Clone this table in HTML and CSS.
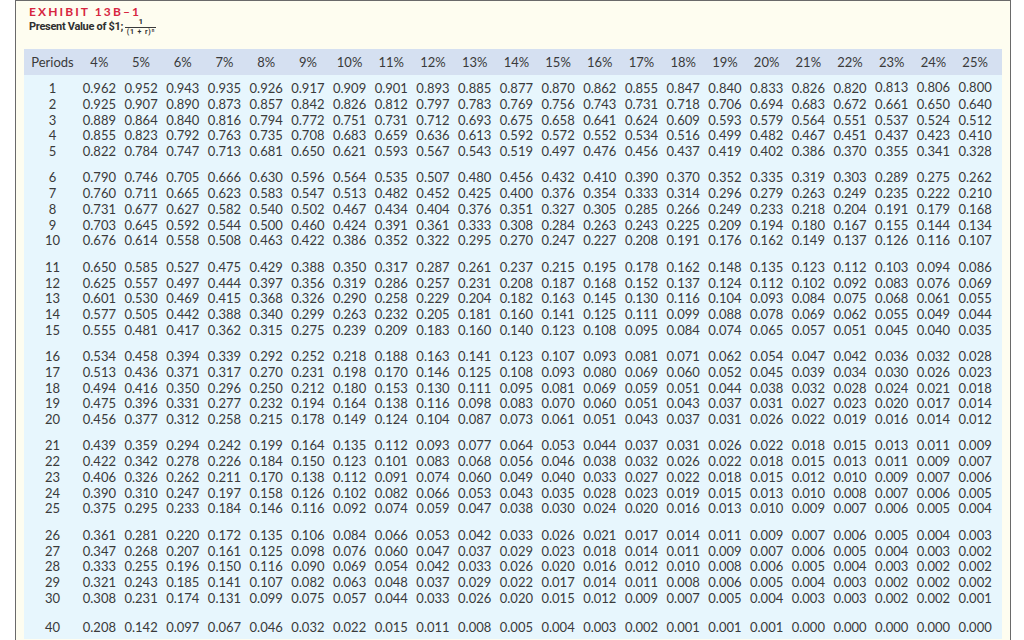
FILE: index.html
```html
<!DOCTYPE html>
<html lang="en">
<head>
<meta charset="utf-8">
<title>Exhibit 13B-1 Present Value of $1</title>
<link rel="stylesheet" href="styles.css">
</head>
<body>
<div class="box">
  <div class="exhibit">EXHIBIT 13B–1</div>
  <div class="pv">
    <span class="pv-text">Present Value of $1;</span>
    <span class="frac"><span class="num">1</span><span class="den">(1 + r)<sup>n</sup></span></span>
  </div>
  <div class="table">
    <div class="head">
      <span class="p">Periods</span><span>4%</span><span>5%</span><span>6%</span><span>7%</span><span>8%</span><span>9%</span><span>10%</span><span>11%</span><span>12%</span><span>13%</span><span>14%</span><span>15%</span><span>16%</span><span>17%</span><span>18%</span><span>19%</span><span>20%</span><span>21%</span><span>22%</span><span>23%</span><span>24%</span><span>25%</span>
    </div>
    <div class="body">
      <div class="group">
        <div class="row"><span class="p">1</span><span>0.962</span><span>0.952</span><span>0.943</span><span>0.935</span><span>0.926</span><span>0.917</span><span>0.909</span><span>0.901</span><span>0.893</span><span>0.885</span><span>0.877</span><span>0.870</span><span>0.862</span><span>0.855</span><span>0.847</span><span>0.840</span><span>0.833</span><span>0.826</span><span>0.820</span><span class="up">0.813</span><span class="up">0.806</span><span class="up">0.800</span></div>
        <div class="row"><span class="p">2</span><span>0.925</span><span>0.907</span><span>0.890</span><span>0.873</span><span>0.857</span><span>0.842</span><span>0.826</span><span>0.812</span><span>0.797</span><span>0.783</span><span>0.769</span><span>0.756</span><span>0.743</span><span>0.731</span><span>0.718</span><span>0.706</span><span>0.694</span><span>0.683</span><span>0.672</span><span>0.661</span><span>0.650</span><span>0.640</span></div>
        <div class="row"><span class="p">3</span><span>0.889</span><span>0.864</span><span>0.840</span><span>0.816</span><span>0.794</span><span>0.772</span><span>0.751</span><span>0.731</span><span>0.712</span><span>0.693</span><span>0.675</span><span>0.658</span><span>0.641</span><span>0.624</span><span>0.609</span><span>0.593</span><span>0.579</span><span>0.564</span><span>0.551</span><span>0.537</span><span>0.524</span><span>0.512</span></div>
        <div class="row"><span class="p">4</span><span>0.855</span><span>0.823</span><span>0.792</span><span>0.763</span><span>0.735</span><span>0.708</span><span>0.683</span><span>0.659</span><span>0.636</span><span>0.613</span><span>0.592</span><span>0.572</span><span>0.552</span><span>0.534</span><span>0.516</span><span>0.499</span><span>0.482</span><span>0.467</span><span>0.451</span><span>0.437</span><span>0.423</span><span>0.410</span></div>
        <div class="row"><span class="p">5</span><span>0.822</span><span>0.784</span><span>0.747</span><span>0.713</span><span>0.681</span><span>0.650</span><span>0.621</span><span>0.593</span><span>0.567</span><span>0.543</span><span>0.519</span><span>0.497</span><span>0.476</span><span>0.456</span><span>0.437</span><span>0.419</span><span>0.402</span><span>0.386</span><span>0.370</span><span>0.355</span><span>0.341</span><span>0.328</span></div>
      </div>
      <div class="group">
        <div class="row"><span class="p">6</span><span>0.790</span><span>0.746</span><span>0.705</span><span>0.666</span><span>0.630</span><span>0.596</span><span>0.564</span><span>0.535</span><span>0.507</span><span>0.480</span><span>0.456</span><span>0.432</span><span>0.410</span><span>0.390</span><span>0.370</span><span>0.352</span><span>0.335</span><span>0.319</span><span>0.303</span><span>0.289</span><span>0.275</span><span>0.262</span></div>
        <div class="row"><span class="p">7</span><span>0.760</span><span>0.711</span><span>0.665</span><span>0.623</span><span>0.583</span><span>0.547</span><span>0.513</span><span>0.482</span><span>0.452</span><span>0.425</span><span>0.400</span><span>0.376</span><span>0.354</span><span>0.333</span><span>0.314</span><span>0.296</span><span>0.279</span><span>0.263</span><span>0.249</span><span>0.235</span><span>0.222</span><span>0.210</span></div>
        <div class="row"><span class="p">8</span><span>0.731</span><span>0.677</span><span>0.627</span><span>0.582</span><span>0.540</span><span>0.502</span><span>0.467</span><span>0.434</span><span>0.404</span><span>0.376</span><span>0.351</span><span>0.327</span><span>0.305</span><span>0.285</span><span>0.266</span><span>0.249</span><span>0.233</span><span>0.218</span><span>0.204</span><span>0.191</span><span>0.179</span><span>0.168</span></div>
        <div class="row"><span class="p">9</span><span>0.703</span><span>0.645</span><span>0.592</span><span>0.544</span><span>0.500</span><span>0.460</span><span>0.424</span><span>0.391</span><span>0.361</span><span>0.333</span><span>0.308</span><span>0.284</span><span>0.263</span><span>0.243</span><span>0.225</span><span>0.209</span><span>0.194</span><span>0.180</span><span>0.167</span><span>0.155</span><span>0.144</span><span>0.134</span></div>
        <div class="row"><span class="p">10</span><span>0.676</span><span>0.614</span><span>0.558</span><span>0.508</span><span>0.463</span><span>0.422</span><span>0.386</span><span>0.352</span><span>0.322</span><span>0.295</span><span>0.270</span><span>0.247</span><span>0.227</span><span>0.208</span><span>0.191</span><span>0.176</span><span>0.162</span><span>0.149</span><span>0.137</span><span>0.126</span><span>0.116</span><span>0.107</span></div>
      </div>
      <div class="group">
        <div class="row"><span class="p">11</span><span>0.650</span><span>0.585</span><span>0.527</span><span>0.475</span><span>0.429</span><span>0.388</span><span>0.350</span><span>0.317</span><span>0.287</span><span>0.261</span><span>0.237</span><span>0.215</span><span>0.195</span><span>0.178</span><span>0.162</span><span>0.148</span><span>0.135</span><span>0.123</span><span>0.112</span><span>0.103</span><span>0.094</span><span>0.086</span></div>
        <div class="row"><span class="p">12</span><span>0.625</span><span>0.557</span><span>0.497</span><span>0.444</span><span>0.397</span><span>0.356</span><span>0.319</span><span>0.286</span><span>0.257</span><span>0.231</span><span>0.208</span><span>0.187</span><span>0.168</span><span>0.152</span><span>0.137</span><span>0.124</span><span>0.112</span><span>0.102</span><span>0.092</span><span>0.083</span><span>0.076</span><span>0.069</span></div>
        <div class="row"><span class="p">13</span><span>0.601</span><span>0.530</span><span>0.469</span><span>0.415</span><span>0.368</span><span>0.326</span><span>0.290</span><span>0.258</span><span>0.229</span><span>0.204</span><span>0.182</span><span>0.163</span><span>0.145</span><span>0.130</span><span>0.116</span><span>0.104</span><span>0.093</span><span>0.084</span><span>0.075</span><span>0.068</span><span>0.061</span><span>0.055</span></div>
        <div class="row"><span class="p">14</span><span>0.577</span><span>0.505</span><span>0.442</span><span>0.388</span><span>0.340</span><span>0.299</span><span>0.263</span><span>0.232</span><span>0.205</span><span>0.181</span><span>0.160</span><span>0.141</span><span>0.125</span><span>0.111</span><span>0.099</span><span>0.088</span><span>0.078</span><span>0.069</span><span>0.062</span><span>0.055</span><span>0.049</span><span>0.044</span></div>
        <div class="row"><span class="p">15</span><span>0.555</span><span>0.481</span><span>0.417</span><span>0.362</span><span>0.315</span><span>0.275</span><span>0.239</span><span>0.209</span><span>0.183</span><span>0.160</span><span>0.140</span><span>0.123</span><span>0.108</span><span>0.095</span><span>0.084</span><span>0.074</span><span>0.065</span><span>0.057</span><span>0.051</span><span>0.045</span><span>0.040</span><span>0.035</span></div>
      </div>
      <div class="group">
        <div class="row"><span class="p">16</span><span>0.534</span><span>0.458</span><span>0.394</span><span>0.339</span><span>0.292</span><span>0.252</span><span>0.218</span><span>0.188</span><span>0.163</span><span>0.141</span><span>0.123</span><span>0.107</span><span>0.093</span><span>0.081</span><span>0.071</span><span>0.062</span><span>0.054</span><span>0.047</span><span>0.042</span><span>0.036</span><span>0.032</span><span>0.028</span></div>
        <div class="row"><span class="p">17</span><span>0.513</span><span>0.436</span><span>0.371</span><span>0.317</span><span>0.270</span><span>0.231</span><span>0.198</span><span>0.170</span><span>0.146</span><span>0.125</span><span>0.108</span><span>0.093</span><span>0.080</span><span>0.069</span><span>0.060</span><span>0.052</span><span>0.045</span><span>0.039</span><span>0.034</span><span>0.030</span><span>0.026</span><span>0.023</span></div>
        <div class="row"><span class="p">18</span><span>0.494</span><span>0.416</span><span>0.350</span><span>0.296</span><span>0.250</span><span>0.212</span><span>0.180</span><span>0.153</span><span>0.130</span><span>0.111</span><span>0.095</span><span>0.081</span><span>0.069</span><span>0.059</span><span>0.051</span><span>0.044</span><span>0.038</span><span>0.032</span><span>0.028</span><span>0.024</span><span>0.021</span><span>0.018</span></div>
        <div class="row"><span class="p">19</span><span>0.475</span><span>0.396</span><span>0.331</span><span>0.277</span><span>0.232</span><span>0.194</span><span>0.164</span><span>0.138</span><span>0.116</span><span>0.098</span><span>0.083</span><span>0.070</span><span>0.060</span><span>0.051</span><span>0.043</span><span>0.037</span><span>0.031</span><span>0.027</span><span>0.023</span><span>0.020</span><span>0.017</span><span>0.014</span></div>
        <div class="row"><span class="p">20</span><span>0.456</span><span>0.377</span><span>0.312</span><span>0.258</span><span>0.215</span><span>0.178</span><span>0.149</span><span>0.124</span><span>0.104</span><span>0.087</span><span>0.073</span><span>0.061</span><span>0.051</span><span>0.043</span><span>0.037</span><span>0.031</span><span>0.026</span><span>0.022</span><span>0.019</span><span>0.016</span><span>0.014</span><span>0.012</span></div>
      </div>
      <div class="group">
        <div class="row"><span class="p">21</span><span>0.439</span><span>0.359</span><span>0.294</span><span>0.242</span><span>0.199</span><span>0.164</span><span>0.135</span><span>0.112</span><span>0.093</span><span>0.077</span><span>0.064</span><span>0.053</span><span>0.044</span><span>0.037</span><span>0.031</span><span>0.026</span><span>0.022</span><span>0.018</span><span>0.015</span><span>0.013</span><span>0.011</span><span>0.009</span></div>
        <div class="row"><span class="p">22</span><span>0.422</span><span>0.342</span><span>0.278</span><span>0.226</span><span>0.184</span><span>0.150</span><span>0.123</span><span>0.101</span><span>0.083</span><span>0.068</span><span>0.056</span><span>0.046</span><span>0.038</span><span>0.032</span><span>0.026</span><span>0.022</span><span>0.018</span><span>0.015</span><span>0.013</span><span>0.011</span><span>0.009</span><span>0.007</span></div>
        <div class="row"><span class="p">23</span><span>0.406</span><span>0.326</span><span>0.262</span><span>0.211</span><span>0.170</span><span>0.138</span><span>0.112</span><span>0.091</span><span>0.074</span><span>0.060</span><span>0.049</span><span>0.040</span><span>0.033</span><span>0.027</span><span>0.022</span><span>0.018</span><span>0.015</span><span>0.012</span><span>0.010</span><span>0.009</span><span>0.007</span><span>0.006</span></div>
        <div class="row"><span class="p">24</span><span>0.390</span><span>0.310</span><span>0.247</span><span>0.197</span><span>0.158</span><span>0.126</span><span>0.102</span><span>0.082</span><span>0.066</span><span>0.053</span><span>0.043</span><span>0.035</span><span>0.028</span><span>0.023</span><span>0.019</span><span>0.015</span><span>0.013</span><span>0.010</span><span>0.008</span><span>0.007</span><span>0.006</span><span>0.005</span></div>
        <div class="row"><span class="p">25</span><span>0.375</span><span>0.295</span><span>0.233</span><span>0.184</span><span>0.146</span><span>0.116</span><span>0.092</span><span>0.074</span><span>0.059</span><span>0.047</span><span>0.038</span><span>0.030</span><span>0.024</span><span>0.020</span><span>0.016</span><span>0.013</span><span>0.010</span><span>0.009</span><span>0.007</span><span>0.006</span><span>0.005</span><span>0.004</span></div>
      </div>
      <div class="group">
        <div class="row"><span class="p">26</span><span>0.361</span><span>0.281</span><span>0.220</span><span>0.172</span><span>0.135</span><span>0.106</span><span>0.084</span><span>0.066</span><span>0.053</span><span>0.042</span><span>0.033</span><span>0.026</span><span>0.021</span><span>0.017</span><span>0.014</span><span>0.011</span><span>0.009</span><span>0.007</span><span>0.006</span><span>0.005</span><span>0.004</span><span>0.003</span></div>
        <div class="row"><span class="p">27</span><span>0.347</span><span>0.268</span><span>0.207</span><span>0.161</span><span>0.125</span><span>0.098</span><span>0.076</span><span>0.060</span><span>0.047</span><span>0.037</span><span>0.029</span><span>0.023</span><span>0.018</span><span>0.014</span><span>0.011</span><span>0.009</span><span>0.007</span><span>0.006</span><span>0.005</span><span>0.004</span><span>0.003</span><span>0.002</span></div>
        <div class="row"><span class="p">28</span><span>0.333</span><span>0.255</span><span>0.196</span><span>0.150</span><span>0.116</span><span>0.090</span><span>0.069</span><span>0.054</span><span>0.042</span><span>0.033</span><span>0.026</span><span>0.020</span><span>0.016</span><span>0.012</span><span>0.010</span><span>0.008</span><span>0.006</span><span>0.005</span><span>0.004</span><span>0.003</span><span>0.002</span><span>0.002</span></div>
        <div class="row"><span class="p">29</span><span>0.321</span><span>0.243</span><span>0.185</span><span>0.141</span><span>0.107</span><span>0.082</span><span>0.063</span><span>0.048</span><span>0.037</span><span>0.029</span><span>0.022</span><span>0.017</span><span>0.014</span><span>0.011</span><span>0.008</span><span>0.006</span><span>0.005</span><span>0.004</span><span>0.003</span><span>0.002</span><span>0.002</span><span>0.002</span></div>
        <div class="row"><span class="p">30</span><span>0.308</span><span>0.231</span><span>0.174</span><span>0.131</span><span>0.099</span><span>0.075</span><span>0.057</span><span>0.044</span><span>0.033</span><span>0.026</span><span>0.020</span><span>0.015</span><span>0.012</span><span>0.009</span><span>0.007</span><span>0.005</span><span>0.004</span><span>0.003</span><span>0.003</span><span>0.002</span><span>0.002</span><span>0.001</span></div>
      </div>
      <div class="group last">
        <div class="row"><span class="p">40</span><span>0.208</span><span>0.142</span><span>0.097</span><span>0.067</span><span>0.046</span><span>0.032</span><span>0.022</span><span>0.015</span><span>0.011</span><span>0.008</span><span>0.005</span><span>0.004</span><span>0.003</span><span>0.002</span><span>0.001</span><span>0.001</span><span>0.001</span><span>0.000</span><span>0.000</span><span>0.000</span><span>0.000</span><span>0.000</span></div>
      </div>
    </div>
  </div>
</div>
</body>
</html>
```
FILE: styles.css
```css
html, body {
  margin: 0;
  padding: 0;
  background: #ffffff;
}

body {
  font-family: Lato, "Open Sans", "Liberation Sans", sans-serif;
  color: #3a3a3a;
}

.box {
  box-sizing: border-box;
  width: 996px;
  margin-left: 15px;
  min-height: 660px;
  border: 1.5px solid #6a6a6a;
  border-bottom: none;
  background: #fefdf0;
  padding: 0 0 0 7.5px;
}

.exhibit {
  margin: 3.8px 0 0 5.5px;
  font-size: 12px;
  line-height: 14px;
  font-weight: 700;
  letter-spacing: 2.1px;
  color: #d7263f;
}

.pv {
  display: flex;
  align-items: center;
  height: 20px;
  margin: -2px 0 0 5.5px;
  color: #2f2f2f;
}

.pv-text {
  font-family: Roboto, "Liberation Sans", sans-serif;
  font-weight: 700;
  font-size: 11px;
  line-height: 12px;
  letter-spacing: -0.3px;
}

.frac {
  display: inline-flex;
  flex-direction: column;
  align-items: center;
  margin-left: 2px;
  font-family: Roboto, "Liberation Sans", sans-serif;
  font-weight: 700;
}

.num {
  font-size: 8px;
  line-height: 8px;
  padding: 0 0 1px;
}

.den {
  border-top: 0.8px solid #3a3a3a;
  font-size: 7px;
  line-height: 8px;
  padding: 0 2px 0 1.5px;
  letter-spacing: 0.9px;
}

.den sup {
  font-size: 4.5px;
  line-height: 0;
  vertical-align: 2px;
  letter-spacing: 0;
}

.table {
  margin-top: 12.7px;
  width: 978px;
  font-size: 13px;
}

.head, .row {
  display: grid;
  grid-template-columns: 55px repeat(22, 41.71px);
  text-align: center;
  white-space: nowrap;
}

.head {
  height: 26px;
  line-height: 26px;
  background: #d5e0f1;
}

.p {
  padding-left: 3px;
}

.body {
  background: #e7f6fd;
  padding: 5.6px 0 3.5px;
}

.row {
  height: 15.75px;
  line-height: 15.75px;
}

.group + .group {
  margin-top: 10.6px;
}

.group.last {
  margin-top: 13px;
}

.up {
  position: relative;
  top: -1px;
}
```
